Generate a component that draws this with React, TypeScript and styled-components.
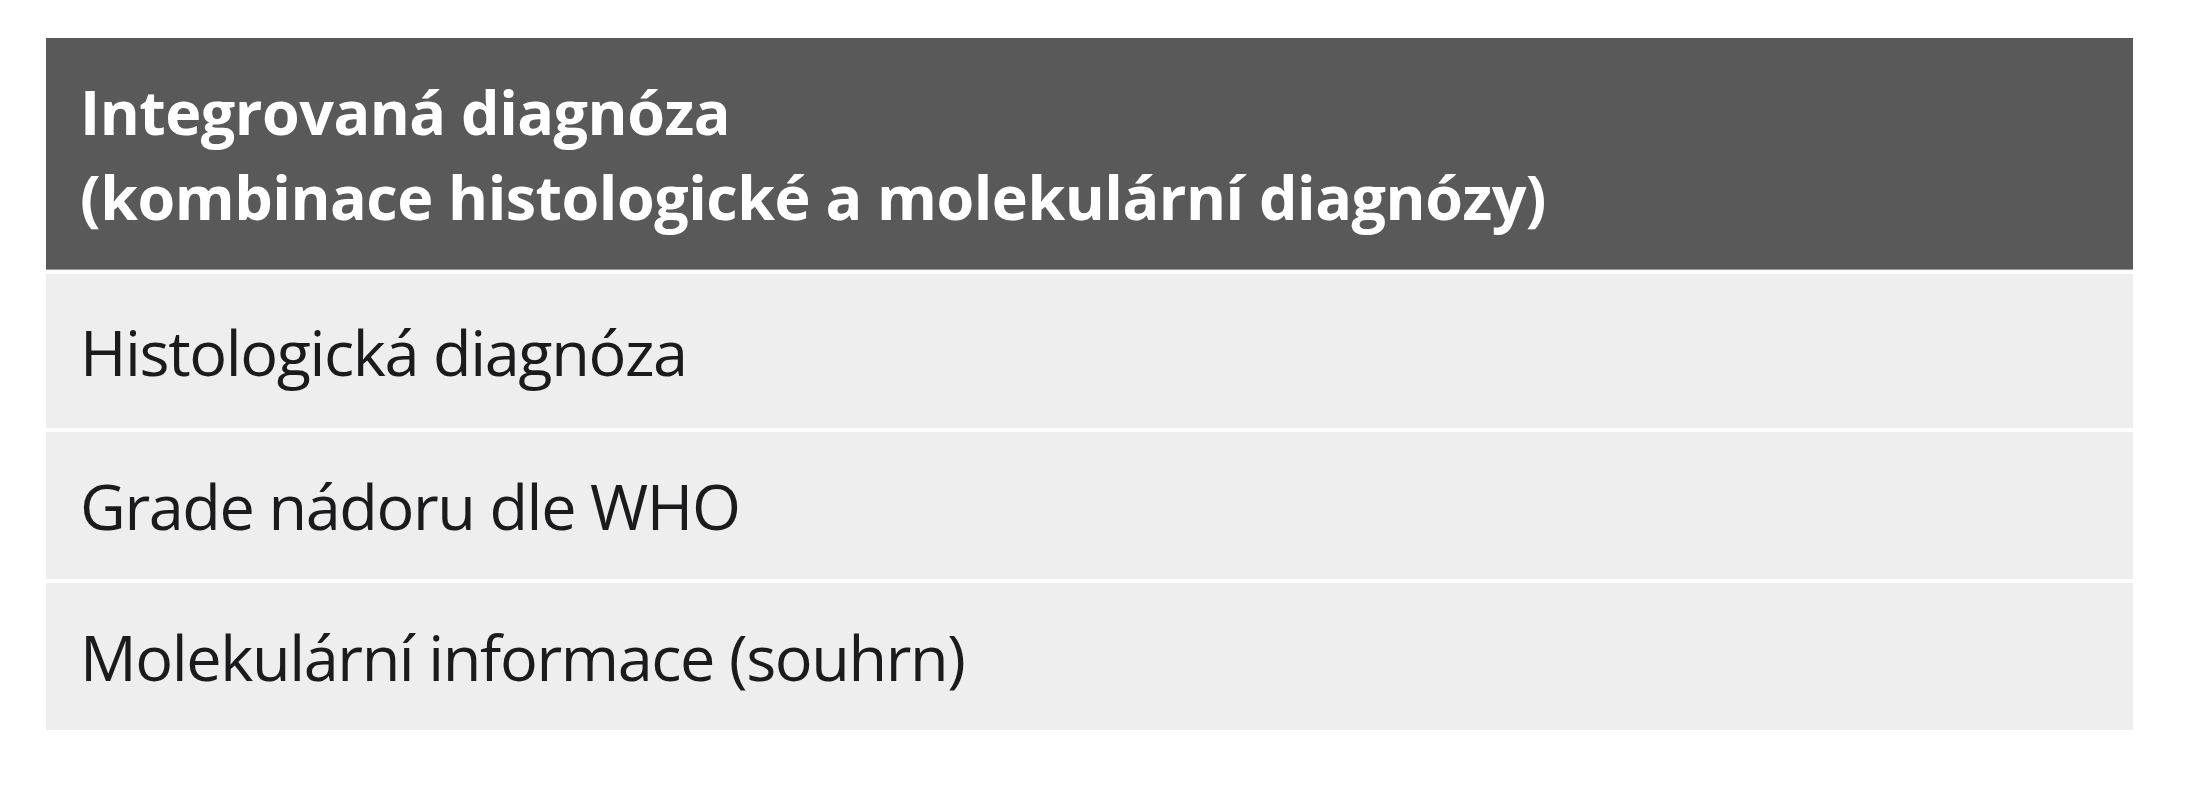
import React from 'react';
import styled, {createGlobalStyle} from "styled-components";

const GlobalStyle = createGlobalStyle`
html, body {
margin: 0;
padding: 0;
background: #ffffff;
}
`

const Page = styled.div`
padding: 38px 0 0 46px;
width: 2087px;
font-family: "Open Sans", "Noto Sans", sans-serif;
`

const Table = styled.div`
display: flex;
flex-direction: column;
gap: 4px;
`

const Head = styled.div`
height: 232px;
background: #595959;
color: #ffffff;
display: flex;
flex-direction: column;
justify-content: center;
padding-left: 34px;
box-sizing: border-box;
border-bottom: 1px solid #9a9a9a;
font-weight: 700;
font-size: 61px;
line-height: 85px;
letter-spacing: -0.5px;
`

const Row = styled.div<{ $h: number }>`
height: ${props => props.$h}px;
background: #eeeeee;
color: #1b1a1c;
display: flex;
align-items: center;
padding-left: 34px;
box-sizing: border-box;
font-size: 63px;
letter-spacing: -1.4px;
`

const rows = [
    {text: 'Histologická diagnóza', h: 154},
    {text: 'Grade nádoru dle WHO', h: 147},
    {text: 'Molekulární informace (souhrn)', h: 147},
]

const App = () => {
    return (
        <>
            <GlobalStyle/>
            <Page>
                <Table>
                    <Head>
                        <span>Integrovaná diagnóza</span>
                        <span>(kombinace histologické a molekulární diagnózy)</span>
                    </Head>
                    {rows.map(r => (
                        <Row key={r.text} $h={r.h}>{r.text}</Row>
                    ))}
                </Table>
            </Page>
        </>
    )
}

export default App;
